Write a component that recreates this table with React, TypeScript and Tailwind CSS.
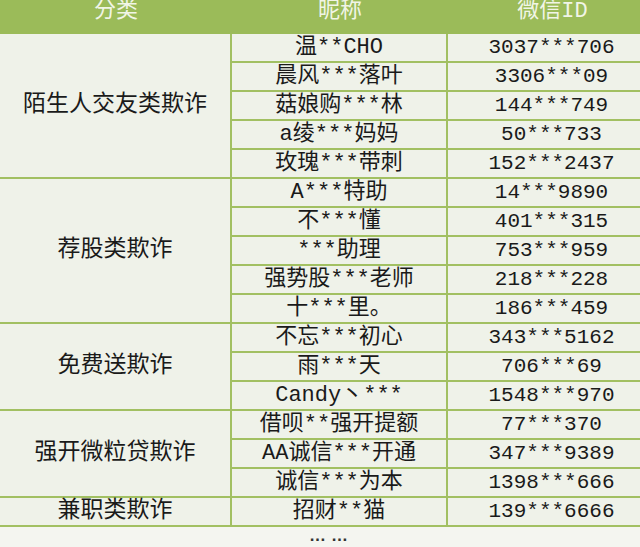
const groups = [
  {
    name: "陌生人交友类欺诈",
    rows: [
      ["温**CHO", "3037***706"],
      ["晨风***落叶", "3306***09"],
      ["菇娘购***林", "144***749"],
      ["a绫***妈妈", "50***733"],
      ["玫瑰***带刺", "152***2437"],
    ],
  },
  {
    name: "荐股类欺诈",
    rows: [
      ["A***特助", "14***9890"],
      ["不***懂", "401***315"],
      ["***助理", "753***959"],
      ["强势股***老师", "218***228"],
      ["十***里。", "186***459"],
    ],
  },
  {
    name: "免费送欺诈",
    rows: [
      ["不忘***初心", "343***5162"],
      ["雨***天", "706***69"],
      ["Candy丶***", "1548***970"],
    ],
  },
  {
    name: "强开微粒贷欺诈",
    rows: [
      ["借呗**强开提额", "77***370"],
      ["AA诚信***开通", "347***9389"],
      ["诚信***为本", "1398***666"],
    ],
  },
  {
    name: "兼职类欺诈",
    rows: [["招财**猫", "139***6666"]],
  },
];

const spans: Record<number, string> = {
  1: "row-span-1",
  3: "row-span-3",
  5: "row-span-5",
};

const cell =
  "flex items-center justify-center border-b-2 border-r-2 border-[#a2c062] whitespace-nowrap text-[#1a1a1a]";

export default function App() {
  return (
    <div className="w-[640px] h-[547px] overflow-hidden bg-[#f4f5f0] font-['Liberation_Mono','Noto_Sans_CJK_SC',monospace]">
      <div className="w-[657px]">
        {/* header */}
        <div className="grid grid-cols-[232px_216px_209px] h-[34px] bg-[#9bbb59] text-[22px] leading-[24px] text-[#f1f5e6]">
          <div className="text-center">分类</div>
          <div className="text-center">昵称</div>
          <div className="text-center">微信ID</div>
        </div>

        <div className="grid grid-cols-[232px_216px_209px] auto-rows-[29px] bg-[#eff2e9]">
          {groups.map((g) => (
            <>
              <div key={g.name} className={`${cell} ${spans[g.rows.length]} text-[23px]`}>
                {g.name}
              </div>
              {g.rows.map(([nick, id]) => (
                <>
                  <div key={nick} className={`${cell} text-[22px] leading-none`}>
                    {nick}
                  </div>
                  <div key={id} className={`${cell} text-[21px] leading-none`}>
                    {id}
                  </div>
                </>
              ))}
            </>
          ))}
        </div>

        <div className="h-[20px] pl-[5px] text-center font-['Liberation_Sans',sans-serif] font-bold text-[17px] leading-[18px] tracking-[5px] text-[#333]">
          ……
        </div>
      </div>
    </div>
  );
}
